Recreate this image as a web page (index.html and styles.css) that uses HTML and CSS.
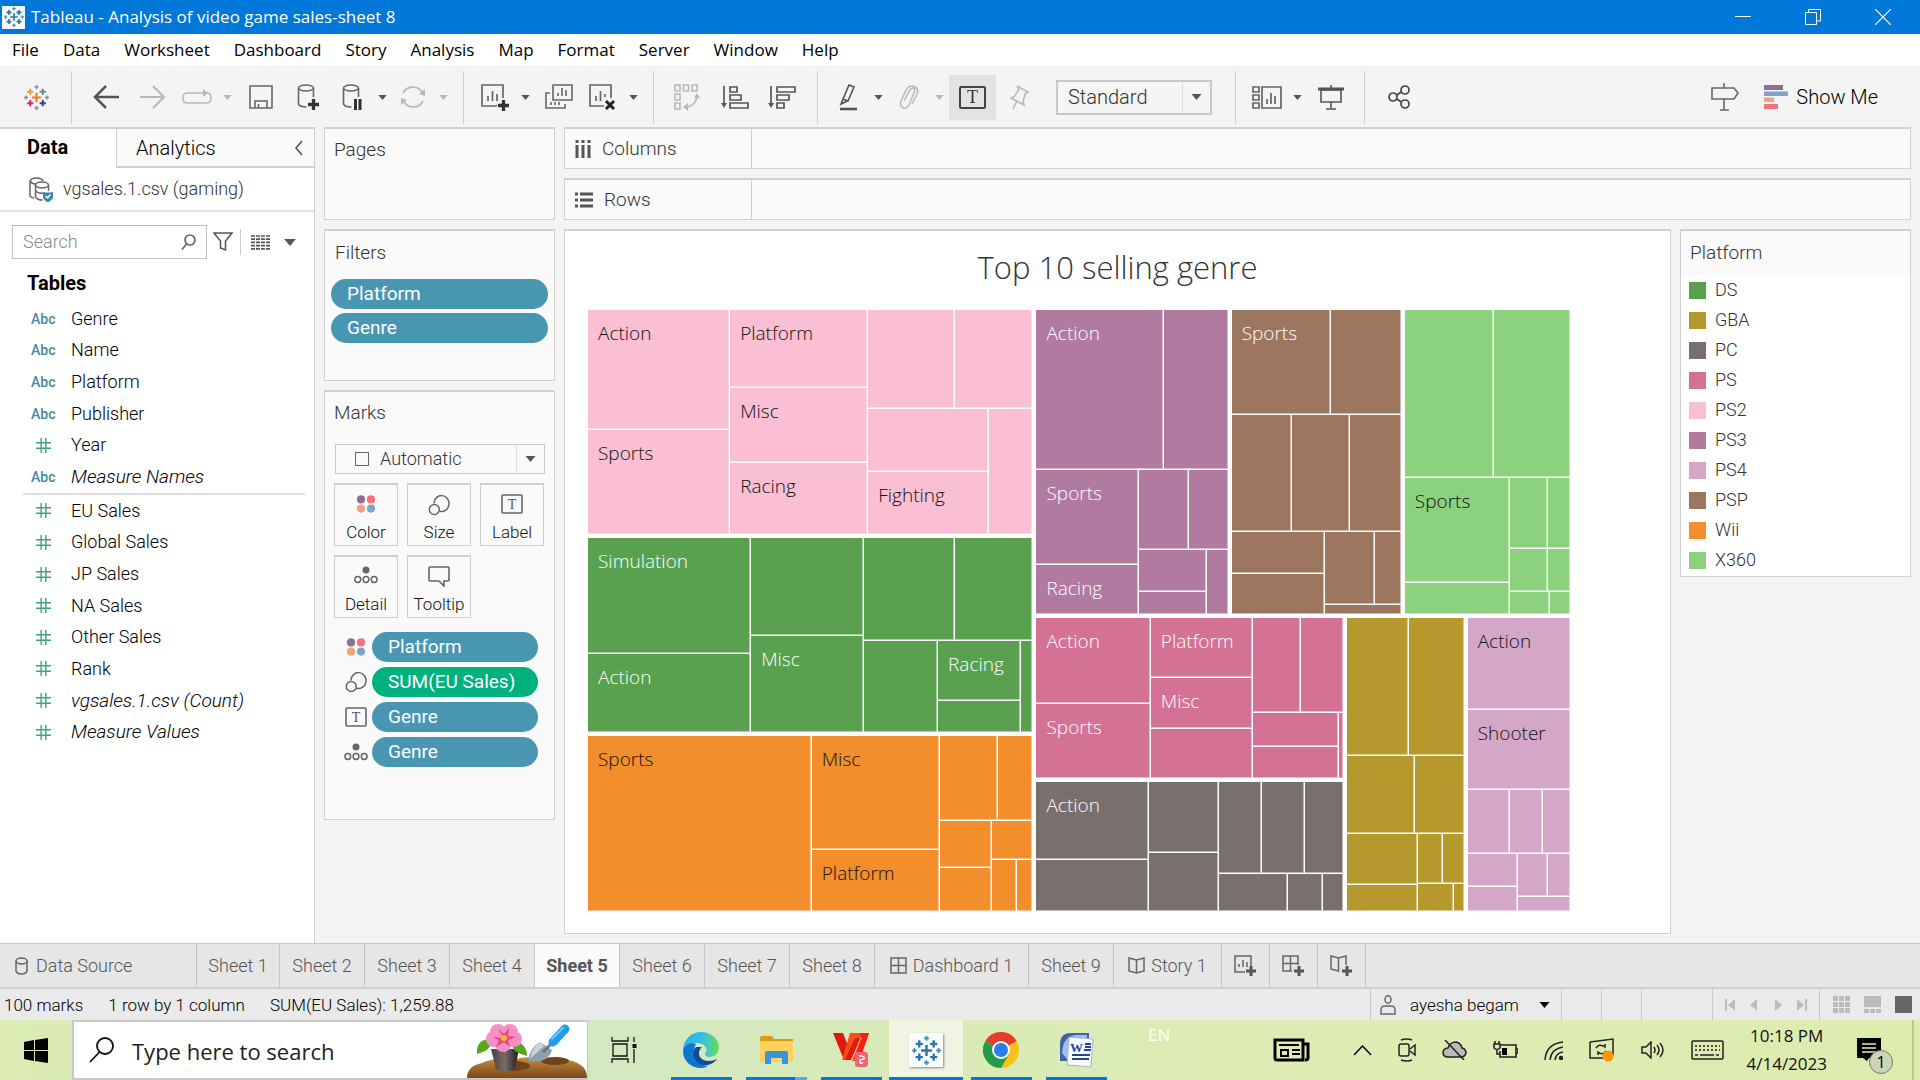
FILE: index.html
```html
<!DOCTYPE html>
<html lang="en">
<head>
<meta charset="utf-8">
<title>Tableau - Analysis of video game sales-sheet 8</title>
<link rel="stylesheet" href="styles.css">
</head>
<body>
<svg class="defs" aria-hidden="true">
  <symbol id="sparkle" viewBox="0 0 24 24">
    <g stroke-width="2"><path d="M12 7.5v9M7.5 12h9" stroke="var(--c1)"/><path d="M6 3.5v6M3 6.500h6" stroke="var(--c2)"/><path d="M18 3.500v6M15 6.500h6" stroke="var(--c3)"/><path d="M6 14.500v6M3 17.500h6" stroke="var(--c4)"/><path d="M18 14.500v6M15 17.500h6" stroke="var(--c5)"/></g>
    <g stroke-width="1.400"><path d="M12 0v4M10 2h4M22 10v4M20 12h4" stroke="var(--c6)"/><path d="M12 20v4M10 22h4M2 10v4M0 12h4" stroke="var(--c7)"/></g>
  </symbol>
  <symbol id="caret" viewBox="0 0 10 6"><path d="M0 0h10L5 6z" fill="currentColor"/></symbol>
  <symbol id="dots" viewBox="0 0 22 20"><ellipse cx="5.500" cy="5" rx="4.500" ry="4.500" fill="#8c7197"/><circle cx="16.500" cy="5" r="4.500" fill="#f7717f"/><circle cx="5.500" cy="15" r="4.500" fill="#f1a27a"/><circle cx="16.500" cy="15" r="4.500" fill="#7fa3cb"/></symbol>
  <symbol id="size" viewBox="0 0 22 22"><g fill="none" stroke="#666" stroke-width="1.500"><path d="M6 9.500A7.500 8 0 1 1 11.500 17.300"/><circle cx="6.300" cy="15.500" r="5"/></g></symbol>
  <symbol id="detail" viewBox="0 0 24 18"><circle cx="12" cy="4" r="3.500" fill="#666"/><g fill="none" stroke="#666" stroke-width="1.500"><circle cx="3.800" cy="13.500" r="2.900"/><circle cx="12" cy="13.500" r="2.900"/><circle cx="20.200" cy="13.500" r="2.900"/></g></symbol>
  <symbol id="plus" viewBox="0 0 10 10"><path d="M5 0v10M0 5h10" stroke="currentColor" stroke-width="3"/></symbol>
  <symbol id="hash" viewBox="0 0 16 16"><path d="M5.500 0v16M10.500 0v16M0 5h16M0 11h16" stroke="#3fa580" stroke-width="1.500"/></symbol>
</svg>

<header class="titlebar">
  <span class="app-icon"><svg class="blue-spark" width="20" height="20"><use href="#sparkle"/></svg></span>
  <span>Tableau - Analysis of video game sales-sheet 8</span>
  <div class="win-buttons">
    <button aria-label="Minimize"><svg width="16" height="16"><path d="M0 7.500h16" stroke="#fff"/></svg></button>
    <button aria-label="Restore"><svg width="16" height="16" fill="none" stroke="#fff"><path d="M.5 3.500h11v12h-11zM3.500 3V.5h12v11.500H12"/></svg></button>
    <button aria-label="Close"><svg width="16" height="16" stroke="#fff" stroke-width="1.200"><path d="M0 0l16 16M16 0L0 16"/></svg></button>
  </div>
</header>

<nav class="menubar">
  <a href="#">File</a><a href="#">Data</a><a href="#">Worksheet</a><a href="#">Dashboard</a><a href="#">Story</a><a href="#">Analysis</a><a href="#">Map</a><a href="#">Format</a><a href="#">Server</a><a href="#">Window</a><a href="#">Help</a>
</nav>

<div class="toolbar">
  <div class="group home"><button class="tool" aria-label="Start page"><svg class="color-spark" width="25" height="25"><use href="#sparkle"/></svg></button></div>
  <div class="group nav">
    <button class="tool" aria-label="Back"><svg width="26" height="24" fill="none" stroke="#555" stroke-width="2.500"><path d="M26 12H2M13 1L2 12l11 11"/></svg></button>
    <button class="tool off" aria-label="Forward"><svg width="26" height="24" fill="none" stroke="currentColor" stroke-width="2.200"><path d="M0 12h24M13 1l11 11-11 11"/></svg></button>
    <button class="tool split off" aria-label="Replay"><svg width="30" height="18" fill="none" stroke="currentColor" stroke-width="1.600"><path d="M22 5H5Q1 5 1 10t4 5h19q5 0 5-5t-4-5"/><path d="M21 1l5 4-5 4z" fill="currentColor" stroke="none"/></svg></button>
    <button class="drop off" aria-label="Replay options"><svg width="9" height="5"><use href="#caret"/></svg></button>
    <button class="tool" aria-label="Save"><svg width="24" height="24" fill="none" stroke="#666" stroke-width="1.600"><path d="M1 1h22v22H1zM6 23v-7h12v7M9.500 23v-4"/></svg></button>
    <button class="tool" aria-label="New data source"><svg width="24" height="26" fill="none" stroke="#666" stroke-width="1.600"><ellipse cx="10" cy="4" rx="7.500" ry="3"/><path d="M2.500 4v16q1 3 8 3M17.500 4v9"/><use href="#plus" x="12" y="15" width="11" height="11" color="#333"/></svg></button>
    <button class="tool split" aria-label="Pause updates"><svg width="22" height="26" fill="none" stroke="#666" stroke-width="1.600"><ellipse cx="10" cy="4" rx="7.500" ry="3"/><path d="M2.500 4v16q1 3 8 3M17.500 4v9"/><path d="M14.500 15v11M19 15v11" stroke="#333" stroke-width="3"/></svg></button>
    <button class="drop" aria-label="Pause options"><svg width="9" height="5"><use href="#caret"/></svg></button>
    <button class="tool split off" aria-label="Run update"><svg width="26" height="24" fill="none" stroke="currentColor" stroke-width="1.700"><path d="M3 8A11 11 0 0 1 22 7M23 16A11 11 0 0 1 4 17"/><path d="M25 4v7l-6-2zM1 20v-7l6 2z" fill="currentColor" stroke="none"/></svg></button>
    <button class="drop off" aria-label="Update options"><svg width="9" height="5"><use href="#caret"/></svg></button>
  </div>
  <div class="group">
    <button class="tool split" aria-label="New worksheet"><svg width="28" height="27" fill="none" stroke="#666" stroke-width="1.700"><path d="M16 22H1V1h21v13M7 17v-5M11.500 17V7M16 17v-7"/><use href="#plus" x="17" y="16" width="11" height="11" color="#333"/></svg></button>
    <button class="drop" aria-label="New options"><svg width="9" height="5"><use href="#caret"/></svg></button>
    <button class="tool" aria-label="Duplicate"><svg width="28" height="26" fill="none" stroke="#666" stroke-width="1.600"><path d="M8 1h19v15H8zM13 12V9M17 12V4M21 12V6M5 9H1v15h19v-4M6 21v-3M10 21v-3M14 21v-3"/></svg></button>
    <button class="tool split" aria-label="Clear sheet"><svg width="28" height="27" fill="none" stroke="#666" stroke-width="1.700"><path d="M15 22H1V1h21v13M7 17v-5M11.500 17V7M16 13v-3"/><path d="M17 17l8 8M25 17l-8 8" stroke="#222" stroke-width="3"/></svg></button>
    <button class="drop" aria-label="Clear options"><svg width="9" height="5"><use href="#caret"/></svg></button>
  </div>
  <div class="group sorting">
    <button class="tool off" aria-label="Swap"><svg width="27" height="27" fill="none" stroke="currentColor" stroke-width="1.600"><path d="M1 1h5v6H1zM9.500 1h5v6h-5zM18 1h5v6h-5zM1 10h5v6H1zM1 19h5v6H1zM12 23q10-1 11-11"/><path d="M20 14l3-5 3 5zM14 19l-5 4 5 4z" fill="currentColor" stroke="none"/></svg></button>
    <button class="tool" aria-label="Sort ascending"><svg width="28" height="24" fill="none" stroke="#555" stroke-width="1.700"><path d="M3 1v20M9 2h7v5H9zM9 10h11v5H9zM9 18h18v5H9z"/><path d="M0 18h6l-3 5z" fill="#555" stroke="none"/></svg></button>
    <button class="tool" aria-label="Sort descending"><svg width="28" height="24" fill="none" stroke="#555" stroke-width="1.700"><path d="M3 1v20M9 2h18v5H9zM9 10h12v5H9zM9 18h7v5H9z"/><path d="M0 18h6l-3 5z" fill="#555" stroke="none"/></svg></button>
  </div>
  <div class="group marks-tools">
    <button class="tool split" aria-label="Highlight"><svg width="18" height="27" fill="none" stroke="#555" stroke-width="1.600"><path d="M10 1l5 2-6 14-5-2zM4 15l-2 5 6-3"/><path d="M1 25h17" stroke-width="2.600"/></svg></button>
    <button class="drop" aria-label="Highlight options"><svg width="9" height="5"><use href="#caret"/></svg></button>
    <button class="tool split off" aria-label="Group"><svg width="20" height="25" fill="none" stroke="currentColor" stroke-width="1.500"><path d="M5 16L11 5q4-4 5 0l-6 15q-4 6-8 1-1-2 0-5L7 5q4-6 9-3 4 2 2 7l-5 10"/></svg></button>
    <button class="drop off" aria-label="Group options"><svg width="9" height="5"><use href="#caret"/></svg></button>
    <button class="tool active" aria-label="Show mark labels"><svg width="27" height="24"><rect x="1" y="2" width="25" height="21" rx="1" fill="none" stroke="#444" stroke-width="2"/><text x="13.500" y="18" text-anchor="middle" class="serif-t big">T</text></svg></button>
    <button class="tool off" aria-label="Fix axes"><svg width="22" height="26" fill="none" stroke="currentColor" stroke-width="1.600"><path d="M8 2l11 6-3 2-2 8 1 3L2 14l4-2 4-7zM8 17l-4 8"/></svg></button>
    <label class="combo fit"><select aria-label="Fit"><option>Standard</option></select><svg width="10" height="6"><use href="#caret"/></svg></label>
  </div>
  <div class="group present">
    <button class="tool split" aria-label="Show cards"><svg width="30" height="23" fill="none" stroke="#666" stroke-width="1.700"><path d="M1 1h6v5H1zM1 9h6v5H1zM1 17h6v5H1zM10 1h19v21H10zM15 18v-5M19 18V7M23 18v-8"/></svg></button>
    <button class="drop" aria-label="Card options"><svg width="9" height="5"><use href="#caret"/></svg></button>
    <button class="tool" aria-label="Presentation mode"><svg width="26" height="25" fill="none" stroke="#555" stroke-width="1.600"><path d="M3 5h20v12H3zM13 0v3M13 17v6M8 24h10"/><path d="M0 4h26" stroke-width="3"/></svg></button>
  </div>
  <div class="group share"><button class="tool" aria-label="Share"><svg width="22" height="24" fill="none" stroke="#444" stroke-width="1.700"><circle cx="5" cy="12" r="4"/><circle cx="17" cy="5" r="4"/><circle cx="17" cy="19" r="4"/><path d="M8.500 10l5-3M8.500 14l5 3"/></svg></button></div>
  <div class="toolbar-end">
    <button class="tool" aria-label="Guide"><svg width="28" height="28" fill="none" stroke="#666" stroke-width="1.600"><path d="M1 5h22l4 5-4 6H1zM13 0v5M13 16v11M9 27h9"/></svg></button>
    <button class="showme"><svg width="24" height="24"><path d="M0 0h19v5H0z" fill="#8c7197"/><path d="M0 6.500h24v4.500H0z" fill="#7fa3cb"/><path d="M0 12.500h10v4.500H0z" fill="#f1a27a"/><path d="M0 19h14v5H0z" fill="#f7717f"/></svg>Show Me</button>
  </div>
</div>

<main class="workspace">
  <aside class="datapane">
    <div class="pane-tabs"><button class="current">Data</button><button>Analytics<svg width="10" height="16" fill="none" stroke="#555" stroke-width="1.600"><path d="M8 1L2 8l6 7"/></svg></button></div>
    <div class="source"><svg width="25" height="25" fill="none" stroke="#666" stroke-width="1.500"><path d="M14 4Q13 1 7.500 1T1 4v15q1 2 4 2M1 4q2 3 6 3"/><ellipse cx="13" cy="8" rx="6.500" ry="3"/><path d="M6.500 8v12q2 3 7 3M19.500 8v6M6.500 14q3 3 8 2"/><path d="M14 15q5 1 10 0v6q-3 4-5 4t-5-4z" fill="#3a86a8" stroke="none"/><path d="M16.500 19l2 2 3-3.500" stroke="#fff"/></svg>vgsales.1.csv (gaming)</div>
    <div class="search-row">
      <label class="search"><input type="text" placeholder="Search" aria-label="Search fields"><svg width="15" height="16" fill="none" stroke="#666" stroke-width="1.700"><circle cx="9" cy="6" r="5"/><path d="M5.500 10L1 15.500"/></svg></label>
      <button aria-label="Filter fields"><svg width="20" height="20" fill="none" stroke="#555" stroke-width="1.500"><path d="M1 1h18l-6.500 8v9l-5-2V9z"/></svg></button>
      <button class="viewas" aria-label="View fields"><svg width="19" height="15" stroke="#555" stroke-width="1.700"><path d="M0 1h19M0 4.200h19M0 7.400h19M0 10.600h19M0 13.800h19" stroke-dasharray="4 1"/></svg><svg class="c" width="12" height="7"><use href="#caret"/></svg></button>
    </div>
    <h2>Tables</h2>
    <ul class="fields dims">
      <li><b>Abc</b>Genre</li><li><b>Abc</b>Name</li><li><b>Abc</b>Platform</li><li><b>Abc</b>Publisher</li>
      <li><svg width="15" height="15"><use href="#hash"/></svg>Year</li><li><b>Abc</b><i>Measure Names</i></li>
    </ul>
    <ul class="fields meas">
      <li><svg width="15" height="15"><use href="#hash"/></svg>EU Sales</li><li><svg width="15" height="15"><use href="#hash"/></svg>Global Sales</li><li><svg width="15" height="15"><use href="#hash"/></svg>JP Sales</li><li><svg width="15" height="15"><use href="#hash"/></svg>NA Sales</li><li><svg width="15" height="15"><use href="#hash"/></svg>Other Sales</li><li><svg width="15" height="15"><use href="#hash"/></svg>Rank</li><li><svg width="15" height="15"><use href="#hash"/></svg><i>vgsales.1.csv (Count)</i></li><li><svg width="15" height="15"><use href="#hash"/></svg><i>Measure Values</i></li>
    </ul>
  </aside>

  <section class="cards">
    <div class="card pages"><h3>Pages</h3></div>
    <div class="card filters"><h3>Filters</h3><button class="pill">Platform</button><button class="pill">Genre</button></div>
    <div class="card marks"><h3>Marks</h3>
      <label class="combo mark-type"><span class="square"></span><select aria-label="Mark type"><option>Automatic</option></select><svg width="10" height="6"><use href="#caret"/></svg></label>
      <div class="mark-grid">
        <button><svg width="20" height="20"><use href="#dots"/></svg>Color</button>
        <button><svg width="22" height="22"><use href="#size"/></svg>Size</button>
        <button><svg width="22" height="20"><rect x="1" y="1" width="20" height="18" rx="1" fill="none" stroke="#666" stroke-width="1.600"/><text x="11" y="15" text-anchor="middle" class="serif-t">T</text></svg>Label</button>
        <button><svg width="24" height="18"><use href="#detail"/></svg>Detail</button>
        <button><svg width="22" height="21" fill="none" stroke="#666" stroke-width="1.600"><path d="M2 1h18q1 0 1 1v12q0 1-1 1h-4v5l-5-5H2q-1 0-1-1V2q0-1 1-1z"/></svg>Tooltip</button>
      </div>
      <div class="encodings">
        <div><svg width="20" height="20"><use href="#dots"/></svg><button class="pill">Platform</button></div>
        <div><svg width="22" height="22"><use href="#size"/></svg><button class="pill green">SUM(EU Sales)</button></div>
        <div><svg width="22" height="20"><rect x="1" y="1" width="20" height="18" rx="1" fill="none" stroke="#666" stroke-width="1.600"/><text x="11" y="15" text-anchor="middle" class="serif-t">T</text></svg><button class="pill">Genre</button></div>
        <div><svg width="24" height="18"><use href="#detail"/></svg><button class="pill">Genre</button></div>
      </div>
    </div>
  </section>

  <section class="sheet">
    <div class="card shelf"><span><svg width="16" height="18" stroke="#555" stroke-width="3"><path d="M2 5v13M8 5v13M14 5v13M2 0v3M8 0v3M14 0v3"/></svg>Columns</span></div>
    <div class="card shelf"><span><svg width="18" height="16" stroke="#555" stroke-width="3"><path d="M5 2h13M5 8h13M5 14h13M0 2h3M0 8h3M0 14h3"/></svg>Rows</span></div>
    <div class="view-row">
      <div class="card canvas"><h1>Top 10 selling genre</h1><div class="treemap" id="treemap"></div></div>
      <div class="card legend"><h3>Platform</h3>
        <ul><li><span class="ds"></span>DS</li><li><span class="gba"></span>GBA</li><li><span class="pc"></span>PC</li><li><span class="ps"></span>PS</li><li><span class="ps2"></span>PS2</li><li><span class="ps3"></span>PS3</li><li><span class="ps4"></span>PS4</li><li><span class="psp"></span>PSP</li><li><span class="wii"></span>Wii</li><li><span class="x360"></span>X360</li></ul>
      </div>
    </div>
  </section>
</main>

<nav class="sheet-tabs">
  <a href="#" class="datasource"><svg width="13" height="18" fill="none" stroke="#666" stroke-width="1.500"><ellipse cx="6.500" cy="4" rx="5.500" ry="3"/><path d="M1 4v10q1 3 5.500 3t5.500-3V4"/></svg>Data Source</a>
  <a href="#" class="first">Sheet 1</a><a href="#">Sheet 2</a><a href="#">Sheet 3</a><a href="#">Sheet 4</a><a href="#" class="on">Sheet 5</a><a href="#">Sheet 6</a><a href="#">Sheet 7</a><a href="#">Sheet 8</a>
  <a href="#" class="wide"><svg width="17" height="17" fill="none" stroke="#666" stroke-width="1.500"><path d="M1 1h15v15H1zM8.500 1v15M1 8.500h15"/></svg>Dashboard 1</a>
  <a href="#">Sheet 9</a>
  <a href="#" class="mid"><svg width="17" height="17" fill="none" stroke="#666" stroke-width="1.500"><path d="M8.500 3L1 1v13l7.500 2 7.500-2V1zM8.500 3v13"/></svg>Story 1</a>
  <button aria-label="New worksheet"><svg width="23" height="22" fill="none" stroke="#666" stroke-width="1.500"><path d="M11 17H1V1h16v10M5 12V9M9 12V5M13 12V7"/><use href="#plus" x="12" y="11" width="10" height="10" color="#555"/></svg></button>
  <button aria-label="New dashboard"><svg width="23" height="22" fill="none" stroke="#666" stroke-width="1.500"><path d="M10 16H1V1h15v9M8.500 1v15M1 8.500h15"/><use href="#plus" x="12" y="11" width="10" height="10" color="#555"/></svg></button>
  <button aria-label="New story"><svg width="23" height="22" fill="none" stroke="#666" stroke-width="1.500"><path d="M16 10V1L8.500 3 1 1v13l7.500 2V3"/><use href="#plus" x="12" y="11" width="10" height="10" color="#555"/></svg></button>
</nav>

<footer class="status">
  <span>100 marks</span><span>1 row by 1 column</span><span>SUM(EU Sales): 1,259.88</span>
  <div class="status-end">
    <button class="user"><svg width="16" height="20" fill="none" stroke="#666" stroke-width="1.500"><ellipse cx="8" cy="4.500" rx="3" ry="3.700"/><path d="M1 19v-4q0-4 4-4h6q4 0 4 4v4z"/></svg>ayesha begam<svg width="11" height="6"><use href="#caret"/></svg></button>
    <span class="cell"></span><span class="cell"></span><span class="cell blank"></span>
    <div class="pager"><svg width="10" height="12" fill="#bbb"><path d="M0 0h2v12H0zM10 0v12L3 6z"/></svg><svg width="10" height="12" fill="#bbb"><path d="M8 0v12L1 6z"/></svg><svg width="10" height="12" fill="#bbb"><path d="M2 0v12l7-6z"/></svg><svg width="10" height="12" fill="#bbb"><path d="M8 0h2v12H8zM0 0v12l7-6z"/></svg></div>
    <div class="views"><svg width="17" height="17" fill="#bbb"><path d="M0 0h5v5H0zM6 0h5v5H6zM12 0h5v5h-5zM0 6h5v5H0zM6 6h5v5H6zM12 6h5v5h-5zM0 12h5v5H0zM6 12h5v5H6zM12 12h5v5h-5z"/></svg><svg width="17" height="17" fill="#bbb"><path d="M0 0h17v11H0zM0 13h5v4H0zM6 13h5v4H6zM12 13h5v4h-5z"/></svg><svg width="17" height="17"><path d="M0 0h17v17H0z" fill="#666"/></svg></div>
  </div>
</footer>

<footer class="taskbar">
  <button class="start" aria-label="Start"><svg width="24" height="25"><path d="M0 4l10-2v10H0zM11 2l13-2v12H11zM0 13h10v10L0 21zM11 13h13v12l-13-2z"/></svg></button>
  <label class="task-search"><svg width="26" height="26" fill="none" stroke="#111" stroke-width="1.800"><circle cx="16" cy="9" r="8"/><path d="M10.500 15L1 25"/></svg><input type="text" placeholder="Type here to search" aria-label="Type here to search">
    <svg class="garden" width="120" height="54" viewBox="0 0 120 54">
      <defs><linearGradient id="soil" x2="0" y2="1"><stop stop-color="#c68d3e"/><stop offset="1" stop-color="#7a4817"/></linearGradient><linearGradient id="pot"><stop stop-color="#4c4240"/><stop offset=".5" stop-color="#776b68"/><stop offset="1" stop-color="#221b1a"/></linearGradient></defs>
      <path d="M0 54q0-12 15-15 12-6 30-3 20-6 40 0 20-2 30 6 5 4 5 12z" fill="url(#soil)"/><ellipse cx="46" cy="42" rx="17" ry="5" fill="#70431a"/><ellipse cx="88" cy="37" rx="14" ry="4" fill="#70431a"/>
      <path d="M24 25h28l-4 20q-10 5-19 0z" fill="url(#pot)"/>
      <path d="M10 30q-1-14 12-15 6 10-12 15zM60 32q0-12-12-15-8 10 12 15z" fill="#58a81e"/>
      <g fill="#f78fc6"><circle cx="31" cy="8" r="8"/><circle cx="43" cy="8" r="8"/><circle cx="47" cy="15" r="8"/><circle cx="27" cy="15" r="8"/><circle cx="36" cy="20" r="8"/></g><path d="M37 14l-6-9 6 5 5-6-1 8 8 1-8 3 2 7-6-5-8 5 3-7-7-3z" fill="#e8487c"/><circle cx="37" cy="14" r="3" fill="#f9b233"/>
      <path d="M73 18l12 8q-4 14-24 11 2-14 12-19z" fill="#8fa0ad"/><path d="M73 18l4 4-14 13q2-12 10-17z" fill="#c8d3da"/><path d="M76 28l9-9" stroke="#6a7882" stroke-width="3"/><path d="M86 18L98 5" stroke="#1e9cf0" stroke-width="9" stroke-linecap="round"/><path d="M85 15L96 4" stroke="#72c6ff" stroke-width="2" stroke-linecap="round"/>
    </svg></label>
  <button class="taskview" aria-label="Task view"><svg width="26" height="26" fill="none" stroke="#111" stroke-width="1.300"><path d="M2 7h14v12H2zM1 0v4h16V0M1 26v-4h16v4M23 0v5M23 12v14"/><path d="M21.500 7h4v4h-4z" fill="#111" stroke="none"/></svg></button>
  <div class="apps">
    <button aria-label="Edge"><svg width="36" height="36" viewBox="0 0 36 36"><defs><linearGradient id="eg"><stop stop-color="#2fa9ec"/><stop offset=".55" stop-color="#35c4e0"/><stop offset="1" stop-color="#6bdc55"/></linearGradient></defs><path d="M0 19C0 8 8 0 18 0s18 7 18 15c0 6-4 10-10 10-4 0-5-3-3-5 2-5-3-9-9-9-7 0-12 4-14 8z" fill="url(#eg)"/><path d="M0 19c2-7 8-9 13-7-5 9 0 21 12 22-2 1-4 2-7 2C8 36 0 29 0 19z" fill="#0d76d0"/><path d="M13 15c-3 3-4 10 1 15 6 6 16 3 20-3-8 4-18 2-18-6 0-2 1-4 3-6z" fill="#10499e"/></svg></button>
    <button class="multi" aria-label="File Explorer"><svg width="33" height="28" viewBox="0 0 33 28"><path d="M0 2q0-2 2-2h9q2 0 3 3h19v8H0z" fill="#dc9c11"/><path d="M0 5h32q1 0 1 1v20H0z" fill="#ffd25c"/><path d="M5 28V17q0-2 2-2h19q2 0 2 2v11h-6v-6H11v6z" fill="#3795dd"/></svg></button>
    <button aria-label="WPS"><svg width="36" height="34" viewBox="0 0 36 34"><path d="M0 0h10l5 13 4-13h10l-2 6-9 21h-7z" fill="#e0180f"/><path d="M17 0h19L26 28h-7l9-23h-6L12 27H9z" fill="#ff4a1a"/><path d="M26 0h10L27 26h-6l8-21z" fill="#f51f16"/><rect x="22" y="19" width="13" height="15" rx="3" fill="#ee6673"/><path d="M26 23h3q3 1 2 3l-4 1v3h3" fill="none" stroke="#fff" stroke-width="1.300"/></svg></button>
    <button class="focus" aria-label="Tableau"><span class="tile-icon"><svg class="blue-spark" width="29" height="29"><use href="#sparkle"/></svg></span></button>
    <button aria-label="Chrome"><svg width="36" height="36" viewBox="0 0 36 36"><circle cx="18" cy="18" r="18" fill="#fbc116"/><path d="M18 18L2.400 9A18 18 0 0 1 33.600 9z" fill="#e33b2e"/><path d="M2.400 9A18 18 0 0 0 18 36l8-14-8-4z" fill="#249b4a"/><circle cx="18" cy="18" r="9" fill="#fff"/><circle cx="18" cy="18" r="7" fill="#2b7de9"/></svg></button>
    <button aria-label="Word"><svg width="35" height="35" viewBox="0 0 35 35"><path d="M1 28V9Q2 0 12 0h18v28z" fill="#3d64a9"/><path d="M3 20Q4 4 16 2h12v4Q10 8 8 26z" fill="#a4bfe5"/><path d="M10 4l24 2-2 28-24-2z" fill="#f6f9fd" stroke="#a4b3cc"/><path d="M26 11h6M26 14h6M25 17h7M13 22h18M13 26h17" stroke="#21459b" stroke-width="2"/><text x="11" y="19" class="word-w">W</text></svg></button>
  </div>
  <span class="lang">EN</span>
  <div class="tray">
    <svg width="38" height="24" fill="none" stroke="#000" stroke-width="3"><path d="M2 2h28v20H4q-2 0-2-2zM30 6h5v14q0 2-3 2"/><path d="M6 7h20M19 12h8M19 16h8" stroke-width="2"/><path d="M8 12h7v6H8z" stroke-width="2"/></svg>
    <svg width="19" height="11" fill="none" stroke="#111" stroke-width="1.600"><path d="M1 10l8.500-9L18 10"/></svg>
    <svg width="18" height="24" fill="none" stroke="#222" stroke-width="1.500"><rect x="1" y="6" width="10" height="12" rx="2"/><path d="M12 11l5-4v10l-5-4M3 2q6-2 11 0M3 22q6 2 11 0"/></svg>
    <svg width="25" height="20" fill="none" stroke="#222" stroke-width="1.500"><path d="M6 17q-5 0-5-5 1-4 5-4 2-6 8-6 5 1 6 6 4 1 4 5-1 4-5 4z" fill="#bbb"/><path d="M3 0l19 20"/></svg>
    <svg width="25" height="18" fill="none" stroke="#222" stroke-width="1.600"><path d="M8 4h15v12H7v-6M23 8h2v4h-2M1 3h6v4q-3 3-6 0zM2 0v3M6 0v3M4 8v5h3"/><path d="M9 7h5v7H9z" fill="#000" stroke="none"/></svg>
    <svg width="19" height="19" fill="none" stroke="#222" stroke-width="1.500"><path d="M1 19Q2 3 19 1M6 19Q7 8 19 6M11 19q1-7 8-8"/><circle cx="17" cy="17" r="1.500" fill="#222"/></svg>
    <svg width="26" height="24" fill="none" stroke="#222" stroke-width="1.500"><path d="M1 4l23-3v16M1 4v16h13M7 10q3-5 9-1V6M17 13q-3 5-8 1v3"/><circle cx="19" cy="18" r="5.500" fill="#ff9500" stroke="none"/></svg>
    <svg width="24" height="18" fill="none" stroke="#222" stroke-width="1.500"><path d="M1 6h4l5-5v16l-5-5H1zM13 6q2 3 0 6M16 4q4 5 0 10M19 2q6 7 0 14"/></svg>
    <svg width="33" height="20" fill="none" stroke="#222" stroke-width="1.500"><rect x="1" y="1" width="31" height="18" rx="1"/><path d="M4 6h25M4 10h25" stroke-dasharray="2 2"/><path d="M4 15h3M9 15h14M25 15h3"/></svg>
    <time>10:18 PM<br>4/14/2023</time>
    <svg class="notes" width="37" height="36"><path d="M0 0h24v20H12l-2 3-4-3H0z"/><path d="M5 6h14M5 10h14M5 14h14" stroke="#e1edb5" stroke-width="1.500"/><circle cx="24" cy="24" r="11.500" fill="#ccd5b6" stroke="#777"/><text x="24" y="30" text-anchor="middle" class="badge">1</text></svg>
  </div>
</footer>
<script src="treemap.js"></script>
</body>
</html>
```

FILE: styles.css
```css
* { box-sizing: border-box; }
body { margin: 0; min-height: 100vh; display: flex; flex-direction: column; background: #f4f4f4; color: #111; font: 300 18px/24px Roboto, "Liberation Sans", sans-serif; }
button { font: inherit; color: inherit; background: none; border: 0; padding: 0; }
a { color: inherit; text-decoration: none; }
ul { list-style: none; margin: 0; padding: 0; }
h1, h2, h3 { margin: 0; font-weight: 300; }
svg { flex: none; display: block; }
.defs { width: 0; height: 0; position: absolute; }
.blue-spark { --c1: #2b76a8; --c2: #2b76a8; --c3: #2b76a8; --c4: #2b76a8; --c5: #2b76a8; --c6: #3f86b3; --c7: #3f86b3; }
.color-spark { --c1: #ec7a2d; --c2: #e8a13c; --c3: #5b93a5; --c4: #cf2e4e; --c5: #2b4a8b; --c6: #7d8fb8; --c7: #7d8fb8; }
.serif-t { font: 14px "Liberation Serif", serif; fill: #555; }
.serif-t.big { font-size: 18px; fill: #333; }

.titlebar { height: 34px; background: #0078d9; color: #fff; display: flex; align-items: center; gap: 6px; padding: 0 2px; font: 17px/24px "Open Sans", sans-serif; }
.app-icon { width: 23px; height: 23px; background: #f5f7fa; display: grid; place-items: center; }
.win-buttons { margin-left: auto; display: flex; }
.win-buttons button { width: 70px; height: 34px; display: grid; place-items: center; }

.menubar { height: 32px; background: #fff; display: flex; align-items: center; gap: 24px; padding-left: 12px; font: 17px/24px "Open Sans", sans-serif; color: #000; }

.toolbar { height: 61px; border-top: 1px solid #eee; display: flex; align-items: center; color: #555; }
.group { height: 53px; display: flex; align-items: center; padding: 0 10px; border-right: 1px solid #d0d0d0; }
.group.home { padding: 0 11px 0 13px; }
.group.sorting { padding: 0 12px 0 10px; }
.group.marks-tools { padding: 0 23px 0 9px; }
.group.share { border: 0; }
.tool { width: 47px; height: 45px; display: grid; place-items: center; }
.tool.split { width: 41px; }
.drop { width: 20px; height: 45px; display: grid; place-items: center; }
.off { color: #b8b8b8; }
.tool.active { background: #e3e3e3; }
.combo { display: flex; align-items: center; border: 1px solid #c8c8c8; background: #fafafa; color: #333; position: relative; }
.combo select { appearance: none; font: inherit; color: inherit; background: none; border: 0; flex: 1; height: 100%; padding: 0; min-width: 0; }
.combo svg { width: 27px; height: 6px; color: #555; }
.combo select { border-right: 1px solid #ddd; }
.fit { width: 156px; height: 35px; margin-left: 13px; border-width: 2px; font-size: 20px; background: #f5f5f5; }
.fit select { padding-left: 10px; }
.toolbar-end { margin-left: auto; display: flex; align-items: center; gap: 16px; padding-right: 42px; }
.showme { display: flex; align-items: center; gap: 8px; color: #000; font-size: 20px; }

.workspace { flex: 1; display: flex; align-items: stretch; gap: 9px; padding-right: 9px; }
.datapane { width: 315px; background: #fff; border-right: 1px solid #d0d0d0; border-top: 2px solid #d0d0d0; }
.pane-tabs { height: 39px; display: flex; }
.pane-tabs button { flex: 1; display: flex; justify-content: space-between; align-items: center; padding: 0 10px 0 19px; background: #fafafa; border: solid #d0d0d0; border-width: 0 0 2px 1px; font-size: 20px; color: #000; }
.pane-tabs .current { flex: 0 0 116px; padding: 0 0 3px 27px; background: #fff; border: 0; font-weight: 700; }
.source { height: 44px; display: flex; align-items: center; gap: 9px; padding-left: 29px; border-bottom: 2px solid #e2e2e2; color: #333; }
.search-row { display: flex; align-items: center; gap: 6px; padding: 13px 0 0 12px; height: 47px; }
.search { width: 195px; height: 34px; border: 1px solid #bdbdbd; display: flex; align-items: center; padding: 0 10px; }
.search input { flex: 1; min-width: 0; border: 0; padding: 0; font: inherit; background: none; }
.search input::placeholder { color: #8a8a8a; opacity: 1; }
.viewas { display: flex; align-items: center; gap: 14px; border-left: 1px solid #ccc; height: 26px; padding-left: 10px; color: #555; margin-left: 1px; }
.datapane h2 { font-size: 20px; font-weight: 700; line-height: 24px; padding: 12px 0 8px 27px; color: #000; }
.fields { display: grid; grid-auto-rows: 1fr; margin: 0 9px 0 23px; color: #000; }
.fields li { display: grid; grid-template-columns: 40px auto; column-gap: 8px; justify-content: start; align-items: center; }
.fields b { font-size: 14px; font-weight: 500; color: #4a86a5; padding-left: 8px; }
.fields i { font-size: 19px; }
.fields li svg { margin-left: 13px; }
.dims { height: 190px; }
.meas { height: 255px; border-top: 2px solid #ddd; }

.card { background: #fafafa; border: 1px solid #d0d0d0; border-top-width: 2px; }
.card h3 { font-size: 19px; line-height: 24px; color: #333; }
.cards { width: 231px; display: flex; flex-direction: column; gap: 9px; }
.cards .card h3 { padding: 9px 9px 7px; }
.pages { height: 93px; }
.filters { height: 152px; display: flex; flex-direction: column; gap: 4px; padding: 0 6px; }
.cards .filters h3 { padding: 10px 4px; }
.pill { display: block; height: 30px; border-radius: 15px; background: #4996b2; color: #fff; text-align: left; padding-left: 16px; font-size: 19px; font-weight: 400; }
.green { background: #00b180; }
.marks { height: 430px; }
.mark-type { margin: 12px 9px 9px 10px; height: 30px; }
.square { width: 14px; height: 14px; border: 1px solid #666; margin: 0 11px 0 19px; }
.mark-grid { display: grid; grid-template-columns: repeat(3, 64px); gap: 9px; padding-left: 9px; }
.mark-grid button { height: 63px; border: 1px solid #d0d0d0; border-top-width: 2px; display: flex; flex-direction: column; align-items: center; justify-content: space-between; padding-top: 9px; font-size: 17px; line-height: 26px; color: #111; }
.encodings { display: flex; flex-direction: column; gap: 5px; padding: 14px 16px 0 17px; }
.encodings div { display: grid; grid-template-columns: 28px 1fr; align-items: center; justify-items: center; column-gap: 2px; }
.encodings .pill { width: 100%; }

.sheet { flex: 1; min-width: 0; display: flex; flex-direction: column; gap: 9px; }
.shelf { height: 42px; }
.shelf span { width: 187px; height: 100%; display: flex; align-items: center; gap: 11px; padding-left: 10px; border-right: 1px solid #d0d0d0; color: #333; font-size: 19px; }
.view-row { flex: 1; display: flex; gap: 9px; align-items: flex-start; }
.canvas { flex: 1; align-self: stretch; margin-bottom: 9px; background: #fff; display: flex; flex-direction: column; }
.canvas h1 { font: 300 31px/40px "Open Sans", sans-serif; text-align: center; padding: 16px 0 23px; color: #333; }
.treemap { flex: 1; display: flex; margin: 0 100px 22px 23px; font: 300 19px/24px "Open Sans", sans-serif; min-height: 0; }
.treemap .row, .treemap .col { display: flex; gap: 1px; min-width: 0; min-height: 0; flex-basis: 0; }
.treemap .col { flex-direction: column; }
.treemap .groups { gap: 4px; }
.tile { flex-basis: 0; min-width: 0; min-height: 0; border: solid rgba(255, 255, 255, .5); border-width: 0 1px 1px 0; white-space: nowrap; }
.tile span { display: block; padding: 11px 0 0 10px; }
.light { color: #fff; }
.dark { color: #111; }
.ds { background-color: #59a14f; } .gba { background-color: #b6992d; } .pc { background-color: #79706e; } .ps { background-color: #d37295; } .ps2 { background-color: #fabfd2; }
.ps3 { background-color: #b07aa1; } .ps4 { background-color: #d4a6c8; } .psp { background-color: #9d7660; } .wii { background-color: #f28e2b; } .x360 { background-color: #8cd17d; }
.legend { width: 231px; height: 348px; background: #fff; }
.legend h3 { background: #fafafa; padding: 10px 9px; height: 44px; }
.legend li { height: 30px; display: flex; align-items: center; gap: 9px; padding-left: 8px; color: #333; }
.legend li span { width: 17px; height: 17px; }

.sheet-tabs { height: 46px; display: flex; background: #e6e6e6; border-top: 1px solid #c8c8c8; border-bottom: 2px solid #d0d0d0; color: #555; }
.sheet-tabs > * { width: 85px; display: flex; align-items: center; justify-content: center; gap: 6px; border-right: 1px solid #c4c4c4; white-space: nowrap; }
.sheet-tabs .datasource { width: 197px; justify-content: flex-start; padding-left: 15px; gap: 8px; }
.sheet-tabs .first { width: 83px; }
.sheet-tabs .on { background: #fafafa; font-weight: 700; }
.sheet-tabs .wide { width: 154px; }
.sheet-tabs .mid { width: 108px; }
.sheet-tabs button { width: 48px; }

.status { height: 31px; display: flex; align-items: center; gap: 25px; padding-left: 4px; background: #eaeaea; color: #000; font-size: 17px; }
.status-end { margin-left: auto; height: 100%; display: flex; }
.status-end > * { border-left: 1px solid #c8c8c8; display: flex; align-items: center; }
.user { width: 191px; padding-left: 9px; gap: 14px; }
.user svg:last-child { margin-left: 6px; }
.cell { width: 40px; }
.blank { width: 71px; }
.pager { width: 107px; justify-content: space-between; padding: 0 12px; }
.views { width: 101px; justify-content: space-between; padding: 0 8px 0 13px; }

.taskbar { height: 60px; display: flex; align-items: stretch; background: linear-gradient(90deg, #dcebb4, #d3e8c2 30%, #d8eab9 45%, #dfecb4 70%, #dcebae); font-family: "Open Sans", sans-serif; font-weight: 400; }
.start { width: 72px; display: grid; place-items: center; }
.task-search { width: 516px; background: #fff; border: 2px solid #c8c8c8; border-right-width: 1px; display: flex; align-items: flex-end; padding-left: 15px; }
.task-search > svg:first-child { align-self: center; }
.task-search input { align-self: center; flex: 1; min-width: 0; border: 0; padding: 2px 0 0 17px; background: none; font: 22px/30px "Open Sans", sans-serif; }
.task-search input::placeholder { color: #222; opacity: 1; }
.taskview { width: 75px; padding-right: 4px; display: grid; place-items: center; }
.apps { display: flex; gap: 1px; padding-left: 1px; }
.apps button { width: 74px; display: grid; place-items: center; background: linear-gradient(#0078d7, #0078d7) center bottom / 61px 3px no-repeat; }
.apps .focus { background: linear-gradient(#0078d7, #0078d7) center bottom / 100% 3px no-repeat, #eff5e0; }
.apps .multi { background: linear-gradient(90deg, #0078d7 80%, #5ea9e3 80%) center bottom / 61px 3px no-repeat; }
.tile-icon { width: 34px; height: 34px; background: #fafcff; display: grid; place-items: center; box-shadow: 1px 1px 2px #889; }
.word-w { font: 700 13px "Liberation Serif", serif; fill: #21459b; }
.lang { color: #fff; font-size: 17px; line-height: 24px; padding: 3px 0 0 35px; }
.tray { margin-left: auto; display: flex; align-items: center; padding-right: 18px; border-right: 2px solid #b9c78c; margin-right: 6px; gap: 26px; }
.tray svg:first-child { margin-right: 16px; }
.tray time { font-size: 17px; line-height: 28px; text-align: center; margin: 0 4px 0 -4px; }
.tray .notes { align-self: flex-end; margin-bottom: 6px; }
.badge { font: 16px "Open Sans", sans-serif; }
```

FILE: treemap.js
```js
// A leaf is [weight, genre label]; R and C lay their children out
// in a row or a column, each sized by its weight.
const R = (w, ...kids) => ({ w, dir: 'row', kids });
const C = (w, ...kids) => ({ w, dir: 'col', kids });
const P = (name, tone, node) => ({ ...node, name, tone });

const tree = { ...R(1,
  { ...C(444,
    P('ps2', 'dark', R(223,
      C(141, [119, 'Action'], [103, 'Sports']),
      C(137, [77, 'Platform'], [74, 'Misc'], [71, 'Racing']),
      C(164, R(98, [86], [77]), R(124, C(120, [62], [62, 'Fighting']), [42])))),
    P('ds', 'light', R(194,
      C(162, [115, 'Simulation'], [78, 'Action']),
      C(112, [97], [96, 'Misc']),
      C(168, R(102, [90], [77]), R(91, [73], C(83, [59, 'Racing'], [31]), [11])))),
    P('wii', 'dark', R(174,
      [222, 'Sports'],
      C(127, [113, 'Misc'], [60, 'Platform']),
      C(93, R(83, [58], [35]), R(90, C(52, [47], [43]), C(41, [38], R(51, [24], [15]))))))
  ), groups: true },
  { ...C(533,
    { ...R(303,
      P('ps3', 'light', C(191,
        R(159, [127, 'Action'], [64]),
        R(143, C(101, [94, 'Sports'], [48, 'Racing']), C(89, R(79, [49], [39]), R(63, C(68, [41], [21]), [20]))))),
      P('psp', 'light', C(169,
        R(104, [98, 'Sports'], [70]),
        R(116, [59], [57], [51]),
        R(81, C(92, [41], [40]), C(76, R(72, [50], [25]), [8])))),
      P('x360', 'dark', C(165,
        R(167, [88], [75]),
        R(135, C(103, [104, 'Sports'], [30]), C(60, R(70, [37], [22]), R(42, [37], [22]), R(21, [39], [20])))))
    ), groups: true },
    { ...R(293,
      { ...C(306,
        P('ps', 'light', R(160,
          C(113, [85, 'Action'], [73, 'Sports']),
          C(101, [59, 'Platform'], [50, 'Misc'], [48]),
          C(90, R(94, [47], [42]), R(65, C(86, [33], [31]), [3])))),
        P('pc', 'light', R(129,
          C(111, [77, 'Action'], [51]),
          C(69, [70], [58]),
          C(124, R(91, [42], [41], [38]), R(37, [68], [33], [20]))))
      ), groups: true },
      P('gba', 'light', C(116,
        R(137, [60], [54]),
        R(77, [66], [48]),
        R(77, C(69, [50], [26]), C(45, R(49, [24], [20]), R(27, [35], [9]))))),
      P('ps4', 'dark', C(102,
        [90, 'Action'],
        [78, 'Shooter'],
        R(63, [41], [32], [27]),
        R(57, C(49, [32], [24]), C(51, R(43, [28], [22]), [13]))))
    ), groups: true }
  ), groups: true }
), groups: true };

function draw(node, name, tone) {
  const el = document.createElement('div');
  if (Array.isArray(node)) {
    const [weight, label] = node;
    el.className = `tile ${name} ${tone}`;
    el.style.flexGrow = weight;
    if (label) {
      const text = document.createElement('span');
      text.textContent = label;
      el.append(text);
    }
    return el;
  }
  el.className = node.dir + (node.groups ? ' groups' : '');
  el.style.flexGrow = node.w;
  node.kids.forEach(kid => el.append(draw(kid, node.name || name, node.tone || tone)));
  return el;
}
document.getElementById('treemap').append(draw(tree));
```
